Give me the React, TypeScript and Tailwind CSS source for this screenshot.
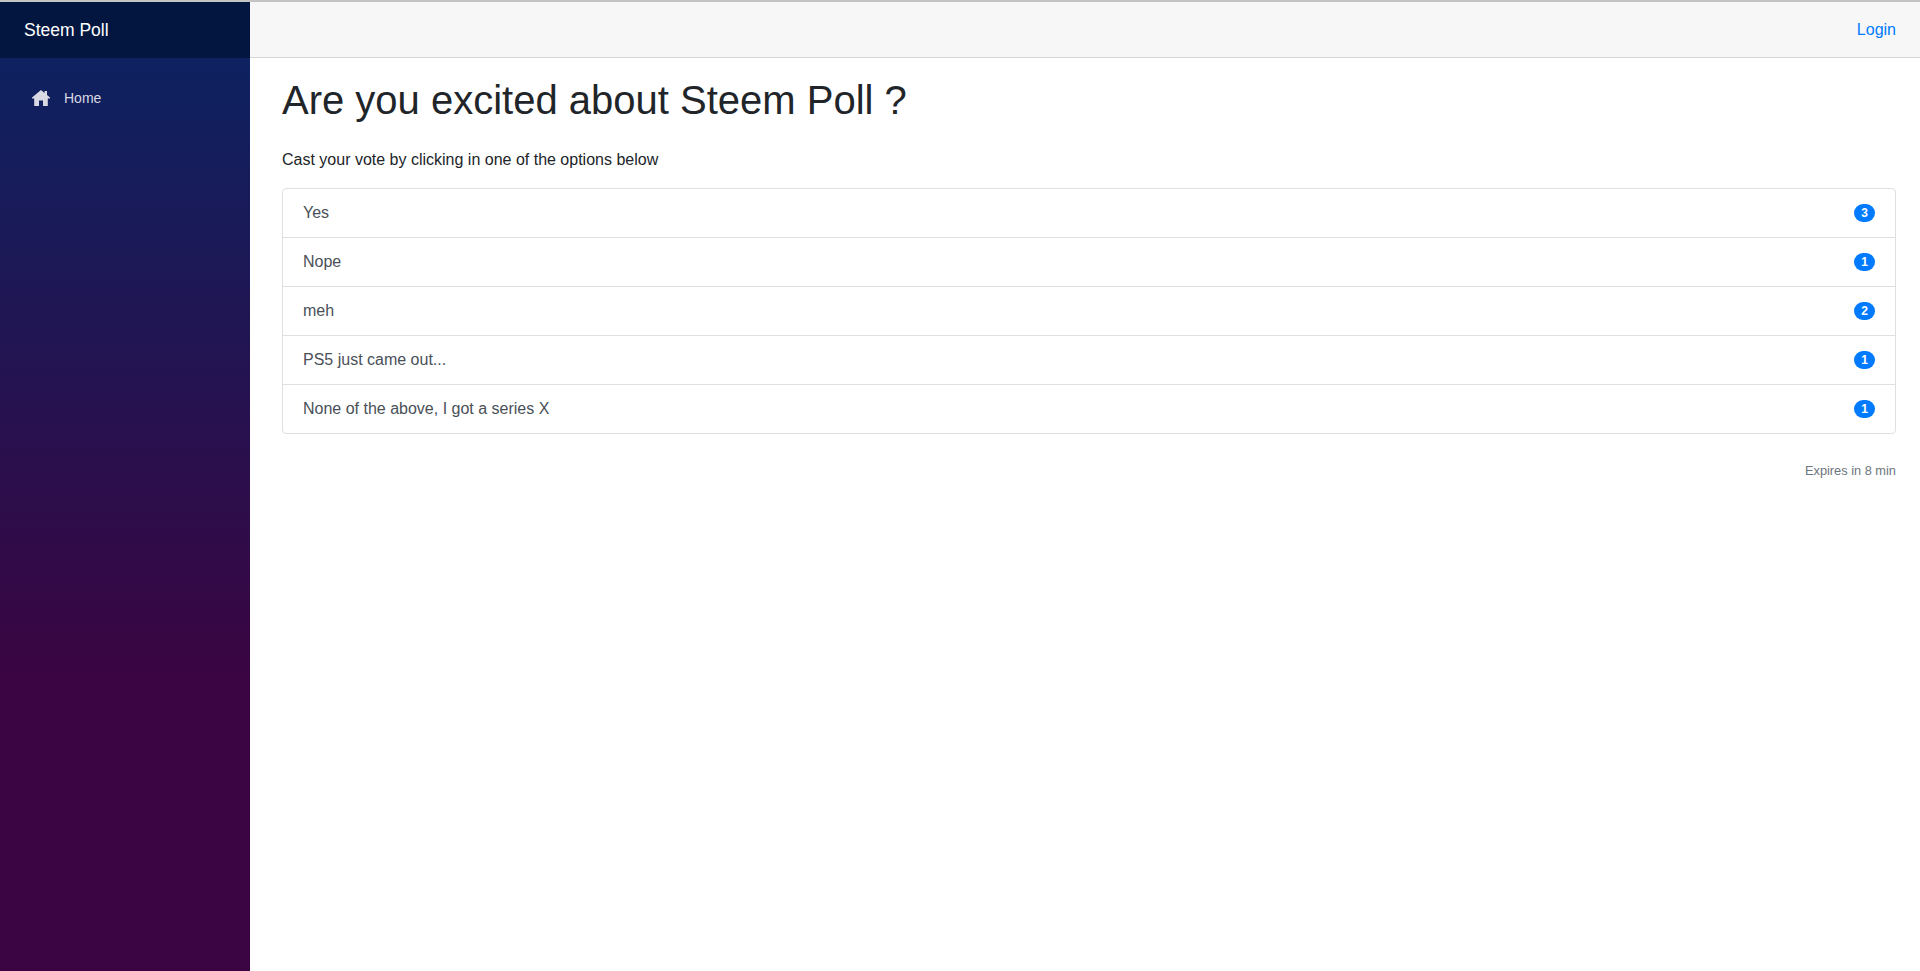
import React from 'react';

const options = [
  { label: 'Yes', votes: 3 },
  { label: 'Nope', votes: 1 },
  { label: 'meh', votes: 2 },
  { label: 'PS5 just came out...', votes: 1 },
  { label: 'None of the above, I got a series X', votes: 1 },
];

const HomeIcon = () => (
  <svg viewBox="0 0 18 16" className="w-[18px] h-4 fill-[#d9d9e3]">
    <path d="M9 0 L12.6 3 V1 H15 V5 L18 7.6 V8.6 H15.8 V16 H11 V10.5 H7 V16 H2.2 V8.6 H0 V7.6 Z" />
  </svg>
);

export default function App() {
  return (
    <div className="min-h-[971px] flex flex-col bg-white font-['Liberation_Sans',Arial,sans-serif] text-[#212529]">
      <div className="h-0.5 bg-[#c4c4c4]" />
      <div className="flex flex-1">
        <aside className="w-[250px] shrink-0 flex flex-col bg-[linear-gradient(to_bottom,#0a2463_0%,#3a0542_70%,#3a0542_100%)]">
          <div className="h-14 flex items-center pl-6 text-white text-[17.5px] bg-[#031640]">Steem Poll</div>
          <a href="#" className="flex items-center mt-[28px] pl-8 text-sm text-[#d9d9e3] h-6">
            <HomeIcon />
            <span className="ml-[14px]">Home</span>
          </a>
        </aside>

        <div className="flex-1 min-w-0 flex flex-col">
          <header className="h-14 flex items-center justify-end pr-6 bg-[#f7f7f7] border-b border-[#d6d6d6]">
            <a href="#" className="text-[#007bff]">Login</a>
          </header>

          <main className="pl-8 pr-6 pt-4">
            <h1 className="text-[40px] leading-[48px] mb-6 mt-0.5">Are you excited about Steem Poll ?</h1>
            <p className="leading-6 mb-4">Cast your vote by clicking in one of the options below</p>

            <ul className="border border-[#dfdfdf] rounded divide-y divide-[#dfdfdf]">
              {options.map((option) => (
                <li key={option.label} className="h-12 box-content flex items-center justify-between px-5 text-[#495057]">
                  <span>{option.label}</span>
                  <span className="min-w-[21px] h-[18px] flex items-center justify-center rounded-full bg-[#007bff] text-white text-xs font-bold">
                    {option.votes}
                  </span>
                </li>
              ))}
            </ul>

            <p className="mt-[27px] text-right text-[12.8px] leading-[19px] text-[#6c757d]">Expires in 8 min</p>
          </main>
        </div>
      </div>
    </div>
  );
}
